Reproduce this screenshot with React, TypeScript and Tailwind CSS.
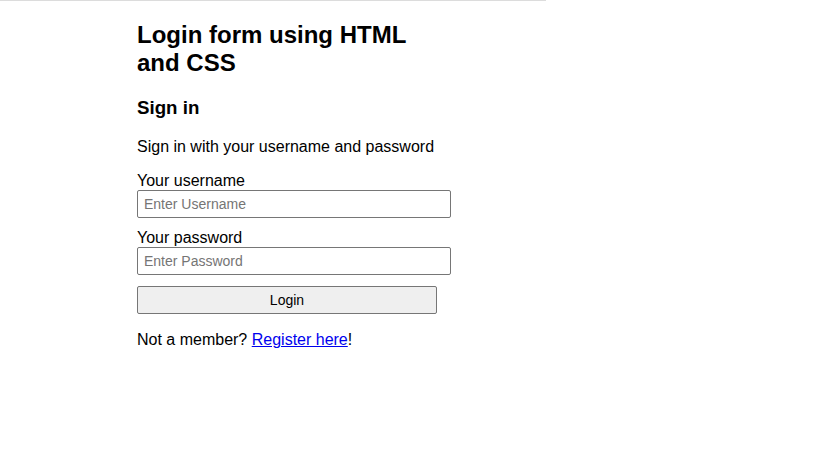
import React from 'react';

export default function App() {
    return (
        <div className="min-h-[460px] bg-white text-black font-['Liberation_Sans',Arial,sans-serif]">
            <div className="h-px w-[546px] bg-[#dcdcdc]" />
            <div className="w-[300px] ml-[137px] pt-[20px]">
                <h1 className="text-[24px] leading-[27.6px] font-bold">Login form using HTML and CSS</h1>
                <h3 className="mt-[21px] text-[18.72px] leading-[21.5px] font-bold">Sign in</h3>
                <p className="mt-[19px] text-[16px] leading-[18.4px]">Sign in with your username and password</p>
                <form onSubmit={e => e.preventDefault()} className="mt-[15px]">
                    <label className="block text-[16px] leading-[19px]">Your username</label>
                    <input
                        type="text"
                        placeholder="Enter Username"
                        className="block w-[314px] h-[28px] px-[6px] border border-[#767676] rounded-[2px] text-[14px] placeholder:text-[#757575] outline-none"
                    />
                    <label className="block mt-[10px] text-[16px] leading-[19px]">Your password</label>
                    <input
                        type="password"
                        placeholder="Enter Password"
                        className="block w-[314px] h-[28px] px-[6px] border border-[#767676] rounded-[2px] text-[14px] placeholder:text-[#757575] outline-none"
                    />
                    <button
                        type="submit"
                        className="block mt-[11px] w-[300px] h-[28px] bg-[#efefef] border border-[#767676] rounded-[2px] text-[14px]"
                    >
                        Login
                    </button>
                </form>
                <p className="mt-[17px] text-[16px] leading-[18.4px]">
                    Not a member? <a href="#" className="text-[#0000ee] underline">Register here</a>!
                </p>
            </div>
        </div>
    );
}
